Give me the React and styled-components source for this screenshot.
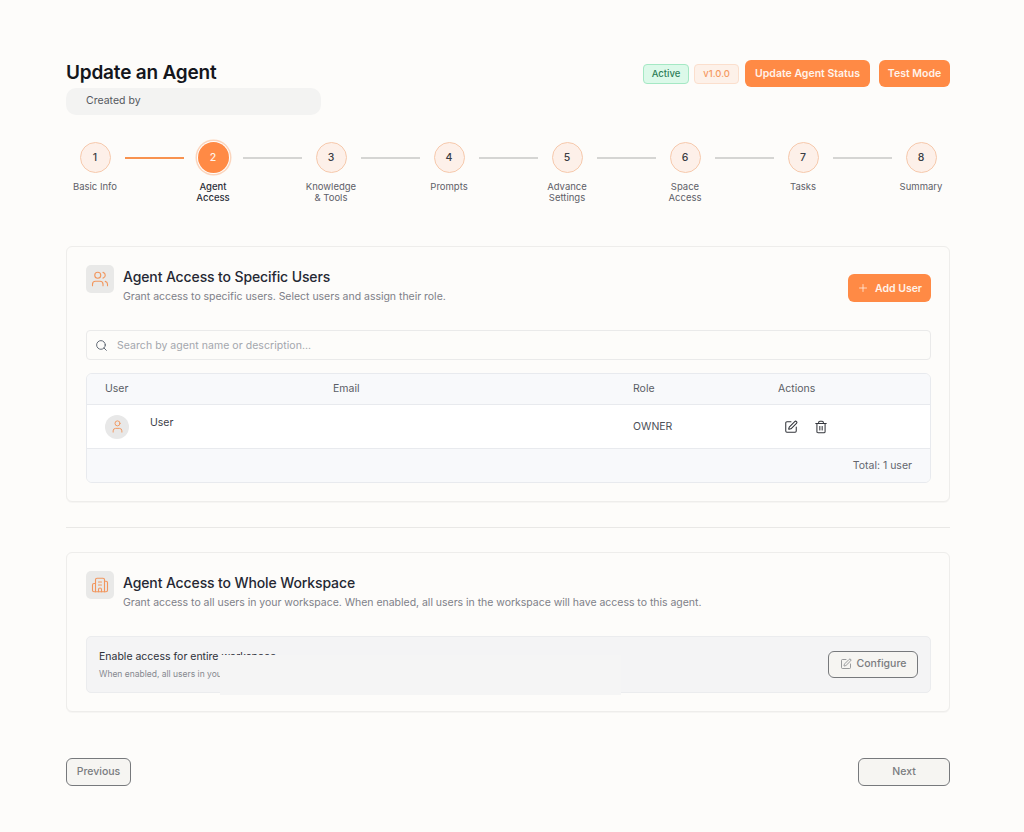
import styled, { createGlobalStyle } from "styled-components";
import { Users, Search, Plus, User, SquarePen, Trash2, Building2 } from "lucide-react";

const STEPS = [
  ["Basic Info"],
  ["Agent", "Access"],
  ["Knowledge", "& Tools"],
  ["Prompts"],
  ["Advance", "Settings"],
  ["Space", "Access"],
  ["Tasks"],
  ["Summary"],
];

export default function App() {
  return (
    <Page>
      <GlobalStyle />
      <Header>
        <div>
          <Title>Update an Agent</Title>
          <CreatedBy>Created by</CreatedBy>
        </div>
        <HeaderActions>
          <Badge $tone="green">Active</Badge>
          <Badge $tone="orange">v1.0.0</Badge>
          <PrimaryButton $width="125px">Update Agent Status</PrimaryButton>
          <PrimaryButton $width="71px">Test Mode</PrimaryButton>
        </HeaderActions>
      </Header>

      <Stepper>
        {STEPS.map((label, i) => (
          <Step key={i}>
            {i < STEPS.length - 1 && <Connector $done={i === 0} />}
            <StepCircle $active={i === 1}>{i + 1}</StepCircle>
            <StepLabel $active={i === 1}>
              {label.map((line) => (
                <span key={line}>{line}</span>
              ))}
            </StepLabel>
          </Step>
        ))}
      </Stepper>

      <Card $top>
        <CardHead>
          <IconTile>
            <Users size={18} strokeWidth={1.5} />
          </IconTile>
          <CardText>
            <CardTitle>Agent Access to Specific Users</CardTitle>
            <CardSub>Grant access to specific users. Select users and assign their role.</CardSub>
          </CardText>
          <AddButton>
            <Plus size={12} strokeWidth={1.5} />
            Add User
          </AddButton>
        </CardHead>

        <SearchBox>
          <Search size={13} strokeWidth={1.6} color="#4b5563" />
          <SearchInput placeholder="Search by agent name or description..." />
        </SearchBox>

        <UserTable>
          <HeadRow>
            <span>User</span>
            <span>Email</span>
            <span>Role</span>
            <span>Actions</span>
          </HeadRow>
          <BodyRow>
            <UserCell>
              <Avatar>
                <User size={15} strokeWidth={1.5} />
              </Avatar>
              <UserName>User</UserName>
            </UserCell>
            <span />
            <span>OWNER</span>
            <ActionIcons>
              <SquarePen size={14} strokeWidth={1.8} />
              <Trash2 size={14} strokeWidth={1.8} />
            </ActionIcons>
          </BodyRow>
          <TotalRow>Total: 1 user</TotalRow>
        </UserTable>
      </Card>

      <Divider />

      <Card>
        <CardHead>
          <IconTile>
            <Building2 size={18} strokeWidth={1.5} />
          </IconTile>
          <CardText>
            <CardTitle>Agent Access to Whole Workspace</CardTitle>
            <CardSub>
              Grant access to all users in your workspace. When enabled, all users in the workspace will have access to this agent.
            </CardSub>
          </CardText>
        </CardHead>

        <EnablePanel>
          <div>
            <EnableTitle>Enable access for entire workspace</EnableTitle>
            <EnableSub>When enabled, all users in your workspace can use this agent</EnableSub>
          </div>
          <OutlineButton $width="90px" $height="27px">
            <SquarePen size={12} strokeWidth={1.5} />
            Configure
          </OutlineButton>
          <Patch />
        </EnablePanel>
      </Card>

      <Footer>
        <OutlineButton $width="65px" $height="28px">Previous</OutlineButton>
        <OutlineButton $width="92px" $height="28px">Next</OutlineButton>
      </Footer>
    </Page>
  );
}

const GlobalStyle = createGlobalStyle`
  html, body {
    margin: 0;
    background: #fdfcfa;
    font-family: Inter, "Liberation Sans", sans-serif;
    color: #1f2430;
  }
  * {
    box-sizing: border-box;
  }
`;

const Page = styled.div`
  width: 1024px;
  height: 832px;
  padding: 60px 74px 0 66px;
  overflow: hidden;
`;

const Header = styled.header`
  display: flex;
  justify-content: space-between;
  align-items: flex-start;
`;

const Title = styled.h1`
  margin: 0;
  font-size: 19px;
  line-height: 25px;
  font-weight: 600;
  letter-spacing: -0.2px;
  color: #14161c;
`;

const CreatedBy = styled.div`
  width: 255px;
  height: 27px;
  margin-top: 3px;
  padding-left: 20px;
  border-radius: 10px;
  background: #f3f3f2;
  font-size: 10.5px;
  line-height: 25px;
  color: #55585e;
`;

const HeaderActions = styled.div`
  display: flex;
  align-items: center;
  gap: 6px;
  height: 27px;
`;

const Badge = styled.span`
  height: 20px;
  padding: 0 8px;
  margin-right: ${(p) => (p.$tone === "green" ? "-1px" : "0")};
  border-radius: 4px;
  border: 1px solid ${(p) => (p.$tone === "green" ? "#a5e8c4" : "#fbdfcd")};
  background: ${(p) => (p.$tone === "green" ? "#dcf9e9" : "#fdf1e9")};
  color: ${(p) => (p.$tone === "green" ? "#2e7d57" : "#f59a62")};
  font-size: 9.5px;
  line-height: 18px;
  font-weight: 500;
`;

const PrimaryButton = styled.button`
  width: ${(p) => p.$width};
  height: 27px;
  padding: 0;
  border: 0;
  border-radius: 6px;
  background: #ff8a45;
  color: #fff3ea;
  font: 600 10.5px Inter, "Liberation Sans", sans-serif;
  & + & {
    margin-left: 3px;
  }
`;

const Stepper = styled.div`
  display: grid;
  grid-template-columns: repeat(8, 118px);
  margin: 26px 0 0 -30px;
  height: 105px;
`;

const Step = styled.div`
  position: relative;
  display: flex;
  flex-direction: column;
  align-items: center;
  width: 118px;
  padding-top: 1px;
`;

const Connector = styled.div`
  position: absolute;
  top: 16px;
  left: 89px;
  width: 59px;
  height: 2px;
  background: ${(p) => (p.$done ? "#f8924f" : "#d5d5d3")};
`;

const StepCircle = styled.div`
  display: flex;
  align-items: center;
  justify-content: center;
  width: 31px;
  height: 31px;
  border-radius: 50%;
  border: ${(p) => (p.$active ? "0" : "1px solid #f6c9ac")};
  background: ${(p) => (p.$active ? "#ff8a45" : "#fdf0e9")};
  box-shadow: ${(p) => (p.$active ? "0 0 0 1px #fff, 0 0 0 2.5px #fbd5bd" : "none")};
  color: ${(p) => (p.$active ? "#fff3ea" : "#3a3d44")};
  font-size: 10.5px;
  font-weight: 500;
`;

const StepLabel = styled.div`
  display: flex;
  flex-direction: column;
  align-items: center;
  margin-top: 8px;
  font-size: 9.5px;
  line-height: 11px;
  color: ${(p) => (p.$active ? "#2c2f38" : "#5d6068")};
  font-weight: ${(p) => (p.$active ? 500 : 400)};
`;

const Card = styled.section`
  border: 1px solid #eeedeb;
  border-radius: 6px;
  background: #fdfcfa;
  padding: 18px 18px 18px 19px;
  height: ${(p) => (p.$top ? "256px" : "160px")};
  box-shadow: 0 1px 1px rgba(0, 0, 0, 0.03);
`;

const CardHead = styled.div`
  display: flex;
  align-items: flex-start;
  gap: 9px;
`;

const IconTile = styled.div`
  display: flex;
  align-items: center;
  justify-content: center;
  width: 28px;
  height: 28px;
  border-radius: 5px;
  background: #e9e9e8;
  color: #f2965d;
  flex: none;
`;

const CardText = styled.div`
  flex: 1;
  padding-top: 2px;
`;

const CardTitle = styled.h2`
  margin: 0;
  font-size: 14px;
  line-height: 19px;
  font-weight: 500;
  letter-spacing: -0.12px;
  color: #252833;
`;

const CardSub = styled.p`
  margin: 4px 0 0;
  font-size: 10.5px;
  line-height: 14px;
  letter-spacing: -0.02px;
  color: #7d8088;
`;

const AddButton = styled.button`
  display: flex;
  align-items: center;
  justify-content: center;
  gap: 6px;
  width: 83px;
  height: 28px;
  margin-top: 9px;
  border: 0;
  border-radius: 6px;
  background: #ff8a45;
  color: #fff3ea;
  font: 600 10.5px Inter, "Liberation Sans", sans-serif;
`;

const SearchBox = styled.div`
  display: flex;
  align-items: center;
  gap: 9px;
  height: 30px;
  margin-top: 26px;
  padding: 0 8px;
  border: 1px solid #eaeaea;
  border-radius: 4px;
  background: #fdfcfa;
`;

const SearchInput = styled.input`
  flex: 1;
  padding: 0;
  border: 0;
  outline: 0;
  background: transparent;
  font: 400 10.5px Inter, "Liberation Sans", sans-serif;
  letter-spacing: 0.05px;
  &::placeholder {
    color: #a3a6ad;
  }
`;

const UserTable = styled.div`
  margin-top: 13px;
  border: 1px solid #e8eaee;
  border-radius: 6px;
  overflow: hidden;
  font-size: 10.5px;
  color: #4d5058;
`;

const COLUMNS = "228px 300px 145px 1fr";

const HeadRow = styled.div`
  display: grid;
  grid-template-columns: ${COLUMNS};
  align-items: center;
  height: 31px;
  padding: 0 18px 2px;
  background: #f8f9fb;
  border-bottom: 1px solid #e8eaee;
  color: #5a5d65;
`;

const BodyRow = styled.div`
  display: grid;
  grid-template-columns: ${COLUMNS};
  align-items: center;
  height: 44px;
  padding: 0 18px;
  background: #fff;
  border-bottom: 1px solid #e8eaee;
`;

const UserCell = styled.div`
  display: flex;
  align-items: flex-start;
  gap: 21px;
`;

const Avatar = styled.div`
  display: flex;
  align-items: center;
  justify-content: center;
  width: 24px;
  height: 24px;
  border-radius: 50%;
  background: #e8e8e8;
  color: #f2965d;
`;

const UserName = styled.span`
  line-height: 15px;
  color: #3d4047;
`;

const ActionIcons = styled.div`
  display: flex;
  gap: 16px;
  padding-left: 6px;
  color: #33353b;
`;

const TotalRow = styled.div`
  height: 33px;
  padding-right: 18px;
  background: #f8f9fb;
  text-align: right;
  line-height: 33px;
  color: #63666e;
`;

const Divider = styled.hr`
  height: 1px;
  margin: 25px 0 24px;
  border: 0;
  background: #e9e8e6;
`;

const EnablePanel = styled.div`
  position: relative;
  display: flex;
  justify-content: space-between;
  align-items: center;
  height: 57px;
  margin-top: 26px;
  padding: 0 12px;
  border: 1px solid #ebecee;
  border-radius: 5px;
  background: #f4f4f5;
`;

const EnableTitle = styled.div`
  font-size: 10.5px;
  line-height: 14px;
  color: #2c2f38;
`;

const EnableSub = styled.div`
  margin-top: 4px;
  font-size: 8.5px;
  line-height: 12px;
  color: #85888f;
`;

/* blank strip sitting over the panel text, as in the capture */
const Patch = styled.div`
  position: absolute;
  left: 133px;
  top: 18px;
  width: 401px;
  height: 40px;
  background: #f5f5f5;
`;

const OutlineButton = styled.button`
  display: flex;
  align-items: center;
  justify-content: center;
  gap: 5px;
  width: ${(p) => p.$width};
  height: ${(p) => p.$height};
  padding: 0 0 2px;
  border: 1px solid #77797c;
  border-radius: 6px;
  background: #f6f5f2;
  color: #7a7c80;
  font: 500 10.5px Inter, "Liberation Sans", sans-serif;
`;

const Footer = styled.footer`
  display: flex;
  justify-content: space-between;
  margin-top: 46px;
`;
